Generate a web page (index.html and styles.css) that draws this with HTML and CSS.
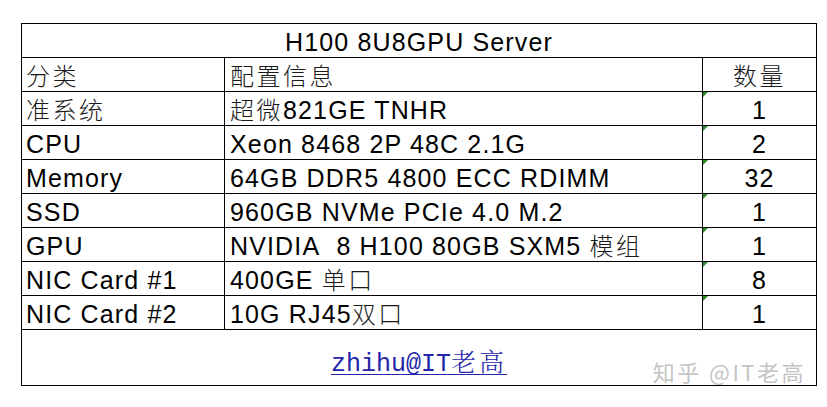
FILE: index.html
```html
<!DOCTYPE html>
<html lang="zh-CN">
<head>
<meta charset="utf-8">
<title>H100 8U8GPU Server</title>
<link rel="stylesheet" href="styles.css">
</head>
<body>
<div class="page">
  <table class="spec">
    <colgroup>
      <col class="c-cat">
      <col class="c-info">
      <col class="c-qty">
    </colgroup>
    <tbody>
      <tr class="row">
        <td class="title" colspan="3">H100 8U8GPU Server</td>
      </tr>
      <tr class="row">
        <td class="cat"><span class="zh">分类</span></td>
        <td class="info"><span class="zh">配置信息</span></td>
        <td class="qty"><span class="zh">数量</span></td>
      </tr>
      <tr class="row">
        <td class="cat"><span class="zh">准系统</span></td>
        <td class="info"><span class="zh">超微</span>821GE TNHR</td>
        <td class="qty flag">1</td>
      </tr>
      <tr class="row">
        <td class="cat">CPU</td>
        <td class="info">Xeon 8468 2P 48C 2.1G</td>
        <td class="qty flag">2</td>
      </tr>
      <tr class="row">
        <td class="cat">Memory</td>
        <td class="info">64GB DDR5 4800 ECC RDIMM</td>
        <td class="qty flag">32</td>
      </tr>
      <tr class="row">
        <td class="cat">SSD</td>
        <td class="info">960GB NVMe PCIe 4.0 M.2</td>
        <td class="qty flag">1</td>
      </tr>
      <tr class="row">
        <td class="cat">GPU</td>
        <td class="info">NVIDIA&nbsp; 8 H100 80GB SXM5 <span class="zh">模组</span></td>
        <td class="qty flag">1</td>
      </tr>
      <tr class="row">
        <td class="cat">NIC Card #1</td>
        <td class="info">400GE <span class="zh">单口</span></td>
        <td class="qty flag">8</td>
      </tr>
      <tr class="row">
        <td class="cat">NIC Card #2</td>
        <td class="info">10G RJ45<span class="zh">双口</span></td>
        <td class="qty flag">1</td>
      </tr>
      <tr class="foot-row">
        <td class="foot" colspan="3">
          <a class="credit" href="#">zhihu@IT<span class="zh-serif">老高</span></a>
          <span class="watermark">知乎 @IT老高</span>
        </td>
      </tr>
    </tbody>
  </table>
</div>
</body>
</html>
```

FILE: styles.css
```css
html, body {
  margin: 0;
  padding: 0;
  background: #ffffff;
}

.page {
  padding: 23px 0 0 21px;
}

.spec {
  border-spacing: 0;
  table-layout: fixed;
  width: 796px;
  border-top: 1px solid #000;
  border-left: 1px solid #000;
  font-family: "Liberation Sans", Arial, "Noto Sans CJK SC", sans-serif;
  font-size: 25px;
  letter-spacing: 1.15px;
  color: #000;
}

.c-cat { width: 203px; }
.c-info { width: 478px; }
.c-qty { width: 114px; }

.spec td {
  box-sizing: border-box;
  border-right: 1px solid #000;
  border-bottom: 1px solid #000;
  padding: 3px 0 0 0;
  line-height: 30px;
  vertical-align: top;
  white-space: nowrap;
  overflow: hidden;
}

.row {
  height: 34px;
}

.title {
  text-align: center;
}

.spec td.cat {
  padding-left: 4px;
}

.spec td.info {
  padding-left: 5px;
}

.qty {
  text-align: center;
}

.flag {
  position: relative;
}

.flag::before {
  content: "";
  position: absolute;
  left: 0;
  top: 0;
  width: 0;
  height: 0;
  border-top: 5px solid #2f8a2f;
  border-right: 5px solid transparent;
}

.zh {
  font-family: "Noto Sans CJK SC", sans-serif;
  font-weight: 300;
  font-size: 24px;
  letter-spacing: 2.5px;
  line-height: 1;
  color: #1a1a1a;
}

.foot-row {
  height: 56px;
}

.spec td.foot {
  position: relative;
  text-align: center;
  padding-top: 18px;
  line-height: 28px;
}

.credit {
  font-family: "Liberation Mono", "Courier New", monospace;
  font-size: 25px;
  letter-spacing: 0;
  color: #2424a8;
  text-decoration: underline;
  text-decoration-thickness: 1px;
  text-underline-offset: 3px;
}

.zh-serif {
  font-family: "Noto Serif CJK SC", "Noto Sans CJK SC", serif;
  font-weight: 300;
  font-size: 25px;
  letter-spacing: 3px;
  line-height: 1;
}

.watermark {
  position: absolute;
  right: 10px;
  bottom: 1px;
  font-family: "Noto Sans CJK SC", sans-serif;
  font-size: 22px;
  line-height: 26px;
  letter-spacing: 2.5px;
  color: #c4c4c4;
}
```
